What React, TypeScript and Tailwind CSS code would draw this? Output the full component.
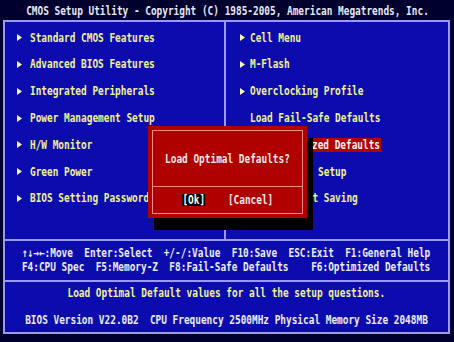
import type { ReactNode } from "react";

// BIOS text is a narrow 8px cell font; DejaVu Sans Mono squeezed to match the cell width
function T({ children, className = "" }: { children: ReactNode; className?: string }) {
    return (
        <span className={`inline-block shrink-0 whitespace-pre scale-x-[0.785] ${className}`}>
            {children}
        </span>
    );
}

function Arrow() {
    return (
        <svg className="w-[5px] h-[7px]" viewBox="0 0 5 7">
            <polygon points="0,0 5,3.5 0,7" fill="#f4f4b4" />
        </svg>
    );
}

interface ItemProps {
    label: string;
    arrow?: boolean;
    selected?: boolean;
    side: 'left' | 'right';
}

function Item({ label, arrow = true, selected = false, side }: ItemProps) {
    const gap = side === 'left' ? 'ml-[8px]' : selected ? 'ml-[3px]' : 'ml-[5px]';
    return (
        <div className={`h-[26.8px] flex items-center ${side === 'left' ? 'pl-[12px]' : 'pl-[14px]'}`}>
            <div className="w-[5px] flex items-center">{arrow && <Arrow />}</div>
            <T
                className={`origin-left leading-[14px] ${gap} ${
                    selected ? 'bg-[#b00000] text-[#fff4f0] px-[2px]' : 'text-[#f2f29a]'
                }`}
            >
                {label}
            </T>
        </div>
    );
}

const leftItems = [
    "Standard CMOS Features",
    "Advanced BIOS Features",
    "Integrated Peripherals",
    "Power Management Setup",
    "H/W Monitor",
    "Green Power",
    "BIOS Setting Password",
];

export default function App() {
    return (
        <div className="relative w-[454px] h-[342px] overflow-hidden bg-[#00002e] font-['DejaVu_Sans_Mono',monospace] font-bold text-[12px]">
            {/* title bar */}
            <div className="h-[20px] pt-[2px] flex items-center justify-center text-[#e8e8f2]">
                <T>CMOS Setup Utility - Copyright (C) 1985-2005, American Megatrends, Inc.</T>
            </div>

            {/* main frame */}
            <div className="ml-[3px] mr-[4px] h-[314px] border-2 border-[#9a9af2] bg-[#0c0cae] flex flex-col">
                {/* menu columns */}
                <div className="h-[219px] flex border-b-2 border-[#9a9af2]">
                    <div className="w-[221px] pt-[2.3px] border-r-2 border-[#9a9af2]">
                        {leftItems.map((label) => (
                            <Item key={label} label={label} side="left" />
                        ))}
                    </div>
                    <div className="flex-1 pt-[2.3px]">
                        <Item label="Cell Menu" side="right" />
                        <Item label="M-Flash" side="right" />
                        <Item label="Overclocking Profile" side="right" />
                        <Item label="Load Fail-Safe Defaults" arrow={false} side="right" />
                        <Item label="Load Optimized Defaults" arrow={false} selected side="right" />
                        <Item label="Save & Exit Setup" arrow={false} side="right" />
                        <Item label="Exit Without Saving" arrow={false} side="right" />
                    </div>
                </div>

                {/* key help */}
                <div className="h-[41px] border-b-2 border-[#9a9af2] flex flex-col items-center justify-center leading-[13.4px] text-[#ececf4]">
                    <T>↑↓→←:Move  Enter:Select  +/-/:Value  F10:Save  ESC:Exit  F1:General Help</T>
                    <T>F4:CPU Spec  F5:Memory-Z  F8:Fail-Safe Defaults    F6:Optimized Defaults</T>
                </div>

                {/* status + version */}
                <div className="flex-1 flex flex-col">
                    <div className="h-[22px] flex items-center justify-center text-[#f2f29a]">
                        <T>Load Optimal Default values for all the setup questions.</T>
                    </div>
                    <div className="mt-[10px] h-[12px] flex items-center justify-center text-[#ececf4]">
                        <T>BIOS Version V22.0B2  CPU Frequency 2500MHz Physical Memory Size 2048MB</T>
                    </div>
                </div>
            </div>

            {/* confirm dialog */}
            <div className="absolute left-[148px] top-[126px] w-[159px] h-[92px] bg-[#b00000] shadow-[6px_12px_0_0_#000] p-[4px]">
                <div className="h-full border border-[#f08a8a] flex flex-col">
                    <div className="h-[56px] border-b border-[#f08a8a] flex items-center justify-center text-[#f6eaea]">
                        <T>Load Optimal Defaults?</T>
                    </div>
                    <div className="flex-1 flex items-center justify-center text-[#f6eaea]">
                        <div className="flex items-center shrink-0 whitespace-pre scale-x-[0.785] leading-[12px]">
                            <span className="bg-black text-white">[Ok]</span>
                            <span className="ml-[29px]">[Cancel]</span>
                        </div>
                    </div>
                </div>
            </div>
        </div>
    );
}
